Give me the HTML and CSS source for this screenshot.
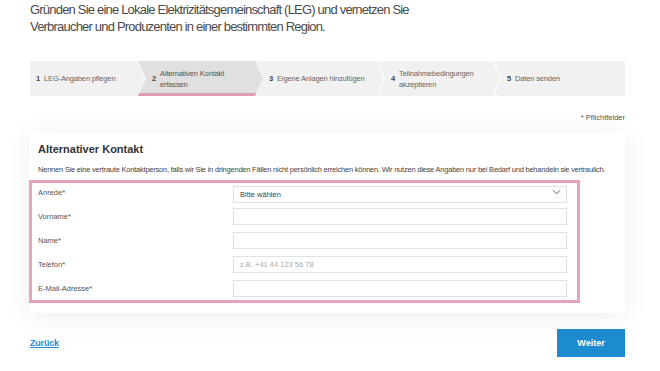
FILE: index.html
```html
<!DOCTYPE html>
<html lang="de">
<head>
    <meta charset="UTF-8">
    <title>LEG gründen</title>
    <link rel="stylesheet" href="styles.css">
</head>
<body>
<div class="page">
    <p class="intro">Gründen Sie eine Lokale Elektrizitätsgemeinschaft (LEG) und vernetzen Sie<br>Verbraucher und Produzenten in einer bestimmten Region.</p>

    <div class="steps">
        <div class="step"><b>1</b><span>LEG-Angaben pflegen</span></div>
        <svg class="sep" viewBox="0 0 8 35" width="8" height="35"><polyline points="0.5,0 7.5,17.5 0.5,35" fill="none" stroke="#fff" stroke-width="1.2"/></svg>
        <div class="step active"><b>2</b><span>Alternativen Kontakt<br>erfassen</span></div>
        <svg class="sep" viewBox="0 0 8 35" width="8" height="35"><polyline points="0.5,0 7.5,17.5 0.5,35" fill="none" stroke="#fff" stroke-width="1.2"/></svg>
        <div class="step wide"><b>3</b><span>Eigene Anlagen hinzufügen</span></div>
        <svg class="sep" viewBox="0 0 8 35" width="8" height="35"><polyline points="0.5,0 7.5,17.5 0.5,35" fill="none" stroke="#fff" stroke-width="1.2"/></svg>
        <div class="step"><b>4</b><span>Teilnahmebedingungen<br>akzeptieren</span></div>
        <svg class="sep" viewBox="0 0 8 35" width="8" height="35"><polyline points="0.5,0 7.5,17.5 0.5,35" fill="none" stroke="#fff" stroke-width="1.2"/></svg>
        <div class="step last"><b>5</b><span>Daten senden</span></div>
    </div>

    <p class="required">* Pflichtfelder</p>

    <div class="card">
        <h2>Alternativer Kontakt</h2>
        <p class="desc">Nennen Sie eine vertraute Kontaktperson, falls wir Sie in dringenden Fällen nicht persönlich erreichen können. Wir nutzen diese Angaben nur bei Bedarf und behandeln sie vertraulich.</p>

        <div class="fields">
            <div class="row">
                <label>Anrede*</label>
                <div class="select-wrap">
                    <select class="field">
                        <option>Bitte wählen</option>
                    </select>
                    <svg class="chev" viewBox="0 0 10 6" width="9" height="6"><polyline points="1,1 5,5 9,1" fill="none" stroke="#555" stroke-width="1"/></svg>
                </div>
            </div>
            <div class="row">
                <label>Vorname*</label>
                <input class="field" type="text">
            </div>
            <div class="row">
                <label>Name*</label>
                <input class="field" type="text">
            </div>
            <div class="row">
                <label>Telefon*</label>
                <input class="field" type="text" placeholder="z.B. +41 44 123 56 78">
            </div>
            <div class="row">
                <label>E-Mail-Adresse*</label>
                <input class="field" type="text">
            </div>
        </div>
    </div>

    <div class="actions">
        <a href="#" class="back">Zurück</a>
        <button class="next">Weiter</button>
    </div>
</div>
</body>
</html>
```

FILE: styles.css
```css
* {
    margin: 0;
    padding: 0;
    box-sizing: border-box;
}

body {
    background: #fff;
    font-family: "Liberation Sans", Arial, sans-serif;
    color: #444;
}

.page {
    width: 660px;
    padding: 1px 35px 0 30px;
}

.intro {
    font-size: 13px;
    line-height: 17px;
    letter-spacing: -0.8px;
    color: #4a4a4a;
}

/* stepper */
.steps {
    display: flex;
    height: 35px;
    margin-top: 26px;
    background: #f1f1f1;
    font-size: 7.5px;
    color: #666;
}

.step {
    flex: 0 0 108px;
    display: flex;
    align-items: center;
    gap: 4px;
    padding-left: 6px;
    line-height: 11px;
    letter-spacing: -0.15px;
}

.step.wide {
    flex-basis: 114px;
}

.step.last {
    flex: 1;
}

.step b {
    color: #444;
}

.step.active {
    position: relative;
    z-index: 1;
    flex-basis: 125px;
    margin: 0 -8px;
    padding-left: 14px;
    background: #e0e0e0;
    box-shadow: inset 0 -3px 0 #e29ab9;
    clip-path: polygon(0 0, calc(100% - 8px) 0, 100% 50%, calc(100% - 8px) 100%, 0 100%, 8px 50%);
    color: #555;
}

.sep {
    flex-shrink: 0;
    display: block;
}

.required {
    margin-top: 17px;
    text-align: right;
    font-size: 7.5px;
    line-height: 10px;
    color: #555;
}

/* card */
.card {
    margin: 10px 0 0 -1px;
    padding: 9px 0 10px 0;
    background: #fff;
    box-shadow: 0 3px 28px rgba(0, 0, 0, 0.07);
}

.card h2 {
    padding-left: 9px;
    font-size: 11px;
    line-height: 14px;
    color: #333;
}

.desc {
    margin: 9px 0 5px;
    padding-left: 9px;
    font-size: 7.5px;
    line-height: 10px;
    letter-spacing: -0.22px;
    color: #444;
}

.fields {
    width: 551px;
    border: 3px solid #e6a3c0;
    padding: 1px 10px 3px 6px;
    display: flex;
    flex-direction: column;
    gap: 7px;
}

.row {
    display: flex;
    align-items: center;
    height: 17px;
}

.row label {
    width: 195px;
    font-size: 7.5px;
    color: #555;
}

.field {
    width: 334px;
    height: 17px;
    border: 1px solid #e1e1e1;
    background: #fff;
    padding: 0 6px;
    font-family: "Liberation Sans", Arial, sans-serif;
    font-size: 7.5px;
    color: #444;
    outline: none;
}

.field::placeholder {
    color: #aaa;
}

.select-wrap {
    position: relative;
}

select.field {
    appearance: none;
    -webkit-appearance: none;
}

.chev {
    position: absolute;
    right: 6px;
    top: 6px;
}

/* footer */
.actions {
    display: flex;
    justify-content: space-between;
    align-items: center;
    margin-top: 16px;
}

.back {
    font-size: 9px;
    font-weight: bold;
    letter-spacing: -0.2px;
    color: #2a8ad0;
    text-decoration: underline;
}

.next {
    width: 68px;
    height: 28px;
    border: none;
    background: #1c8bd0;
    color: #fff;
    font-family: "Liberation Sans", Arial, sans-serif;
    font-size: 9px;
    font-weight: bold;
}
```
